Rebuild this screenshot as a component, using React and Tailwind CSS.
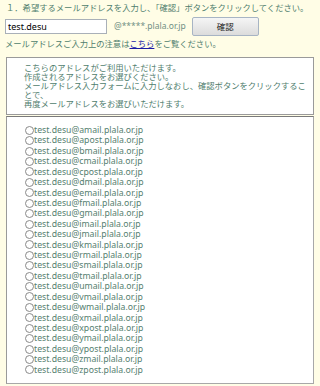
import React from 'react';

const domains = [
  'amail', 'apost', 'bmail', 'cmail', 'cpost', 'dmail', 'email', 'fmail',
  'gmail', 'imail', 'jmail', 'kmail', 'rmail', 'smail', 'tmail', 'umail',
  'vmail', 'wmail', 'xmail', 'xpost', 'ymail', 'ypost', 'zmail', 'zpost',
];

const jp = { fontFamily: '"Noto Sans CJK JP", sans-serif' };

export default function App() {
  return (
    <div
      className="w-[320px] h-[386px] overflow-hidden bg-[#fffde6] text-[#4f7d6d] text-[8.3px]"
      style={jp}
    >
      <p className="pl-[6px] pt-[2px] leading-[11px] whitespace-nowrap">
        １．希望するメールアドレスを入力し、「確認」ボタンをクリックしてください。
      </p>

      <div className="flex items-center pl-[5px] mt-[4px] h-[19px]">
        <div className="w-[102px] h-[15px] bg-white border border-[#a9b0b8] flex items-center pl-[2px] text-black text-[9px] font-['Noto_Sans',sans-serif]">
          test.desu
        </div>
        <span className="ml-[7px] text-[8.5px] text-[#6f8f84] font-['Noto_Sans',sans-serif]">
          @*****.plala.or.jp
        </span>
        <button className="ml-[6px] w-[67px] h-[19px] rounded-[2px] border border-[#a7b4c4] bg-gradient-to-b from-[#f5f5f5] to-[#dcdcdc] text-[#222] text-[8.5px] leading-none">
          確認
        </button>
      </div>

      <p className="pl-[5px] mt-[2px] leading-[11px] whitespace-nowrap">
        メールアドレスご入力上の注意は
        <a href="#" className="text-[#1a1aa6] underline">こちら</a>
        をご覧ください。
      </p>

      <div className="mx-[6px] mt-[8px] bg-white border border-[#9a9a9a] pl-[17px] pr-[3px] pt-[5px] pb-[6px] h-[58px] text-[8.3px] leading-[8.9px]">
        <p>こちらのアドレスがご利用いただけます。</p>
        <p>作成されるアドレスをお選びください。</p>
        <p>メールアドレス入力フォームに入力しなおし、確認ボタンをクリックすることで、</p>
        <p>再度メールアドレスをお選びいただけます。</p>
      </div>

      <div className="mx-[6px] mt-[1px] h-[268px] bg-white border border-t-[#7a7a7a] border-l-[#9a9a9a] border-r-[#a8a8a8] border-b-[#a8a8a8] pl-[18px] pt-[8px]">
        <ul className="font-['Noto_Sans',sans-serif] text-[8.7px] text-[#55806f] leading-[10.43px]">
          {domains.map((d) => (
            <li key={d} className="flex items-center h-[10.43px]">
              <span className="w-[9px] h-[9px] rounded-full border border-[#8a8a8a] bg-white shrink-0" />
              <span className="whitespace-nowrap">test.desu@{d}.plala.or.jp</span>
            </li>
          ))}
        </ul>
      </div>
    </div>
  );
}
